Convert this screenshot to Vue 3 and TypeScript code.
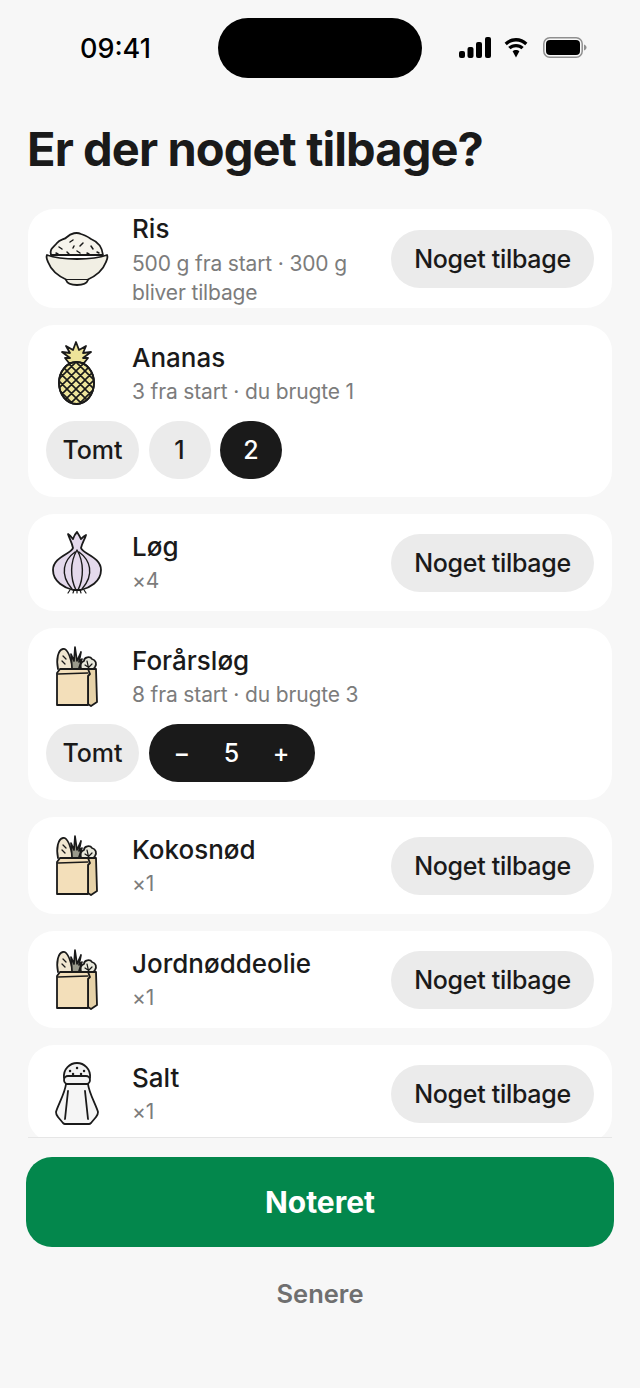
<template>
  <div class="screen">
    <div class="status">
      <span class="time">09:41</span>
      <div class="island"></div>
      <div class="status-icons">
        <svg width="32" height="21" viewBox="0 0 32 21">
          <rect x="0" y="14" width="6" height="7" rx="2" />
          <rect x="8.500" y="10" width="6" height="11" rx="2" />
          <rect x="17" y="5" width="6" height="16" rx="2" />
          <rect x="26" y="0" width="6" height="21" rx="2" />
        </svg>
        <svg width="26" height="21" viewBox="0 0 26 21">
          <path d="M13 4.500c3.600 0 6.800 1.400 9.200 3.700l2.200-2.400C21.400 2.900 17.400 1 13 1S4.600 2.900 1.600 5.800l2.200 2.400C6.200 5.900 9.400 4.500 13 4.500z" />
          <path d="M13 10.200c2.100 0 4 .8 5.400 2.100l2.300-2.400C18.700 8 16 6.900 13 6.900S7.300 8 5.300 9.900l2.300 2.400c1.400-1.300 3.300-2.100 5.400-2.100z" />
          <path d="M13 13c-1.300 0-2.500.5-3.400 1.300L13 20.500l3.400-6.200C15.500 13.500 14.300 13 13 13z" />
        </svg>
        <svg width="44" height="21" viewBox="0 0 44 21">
          <rect x="0.800" y="0.800" width="38.400" height="19.400" rx="6" fill="none" stroke="#8f8f8f" stroke-width="1.500" />
          <rect x="3" y="3" width="34" height="15" rx="4" />
          <path d="M41 7.500c1.500.5 2.500 1.600 2.500 3s-1 2.500-2.500 3z" fill="#8f8f8f" />
        </svg>
      </div>
    </div>

    <h1 class="title">Er der noget tilbage?</h1>

    <div class="list">
      <div
        v-for="item in items"
        :key="item.name"
        class="card"
        :class="{ 'card--tight': item.tight }"
      >
        <div class="row">
          <div class="icon">
            <svg v-if="item.icon === 'rice'" width="62" height="62" viewBox="0 0 62 62" class="line">
              <path d="M5 27C3 21 8 19 11 15c3-4 7-3 10-6 4-4 10-5 14-3 4 1 7 3 10 5 5 2 11 7 12 16z" fill="#f6f4ec" />
              <path d="M1 27c8 3 17 4 30 4s22-1 30-4c1 2 0 5-1 7-3 8-10 14-19 18H21C12 48 5 42 2 34c-1-2-2-5-1-7z" fill="#f1efe4" />
              <path d="M20 52c1 3 5 5 11 5s10-2 11-5" fill="#f1efe4" />
              <path d="M13 19l3 2M24 14l3-2M37 15l-3 3M45 18l2 3M21 24l2 2M31 23l3 2M41 25l2 1M10 25l2 1M27 20l1-2M51 24l2 1" stroke-width="1.500" />
            </svg>

            <svg v-else-if="item.icon === 'pineapple'" width="62" height="62" viewBox="0 0 62 62" class="line">
              <defs>
                <pattern id="hatch" width="9" height="9" patternUnits="userSpaceOnUse" patternTransform="translate(3 1)">
                  <path d="M0 0l9 9M9 0L0 9" stroke="#1a1a1a" stroke-width="1.600" fill="none" />
                </pattern>
              </defs>
              <path d="M23 20l-4-5h5l-8-6 8 1-4-7 7 4 3-8 3 8 7-4-3 7 8-1-8 6h5l-4 5z" fill="#eee49a" />
              <ellipse cx="30.500" cy="40" rx="17.500" ry="21" fill="#eee49a" />
              <ellipse cx="30.500" cy="40" rx="17.500" ry="21" fill="url(#hatch)" />
            </svg>

            <svg v-else-if="item.icon === 'onion'" width="62" height="62" viewBox="0 0 62 62" class="line">
              <path d="M27 16c-1-6-4-10-5-14 3 2 4 4 5 5 1-3 2-5 4-7 2 3 3 5 4 7 1-1 3-3 5-4-1 4-4 8-5 13 2 6 20 9 20 22 0 12-12 18-20 20h-8C19 56 7 50 7 38c0-13 18-16 20-22z" fill="#e4d9ec" />
              <path d="M29 20C18 28 13 42 26 57M33 20c11 8 16 22 3 37M31 18c-7 12-7 28-1 40M31 18c7 12 7 28 1 40" stroke-width="1.400" />
              <path d="M24 58l-2 3M28 58l-1 3M31 58v3M34 58l1 3M38 58l2 3" stroke-width="1.200" />
            </svg>

            <svg v-else-if="item.icon === 'bag'" width="62" height="62" viewBox="0 0 62 62" class="line">
              <path d="M12 23c-2-10 0-19 5-20 5-1 8 10 10 20" fill="#f0e6d0" />
              <path d="M17 10l3 3M16 15l3 3" stroke-width="1.300" />
              <path d="M26 22l-1-14 3 7 1-14 2 14 4-9-2 10 3-3-3 9" fill="#9a9a8c" stroke-width="1.700" />
              <path d="M35 23c-1-4 0-7 3-8 0-4 6-5 8-2 4 1 5 5 3 8l-3 4" fill="#e8e8dc" />
              <path d="M41 15l2 9M39 19l3 2M46 18l-3 3" stroke-width="1.200" />
              <path d="M42 23h8l1 33-6 4-3-2z" fill="#e6d2a8" />
              <path d="M11 27l3-4h28l2 5-2 2v29H11z" fill="#f3dfba" />
              <path d="M12 28l30-1" stroke-width="1.300" />
            </svg>

            <svg v-else width="62" height="62" viewBox="0 0 62 62" class="line">
              <path d="M18 15c-1-9 6-15 13-15s14 6 13 15z" fill="#f2f2f2" />
              <rect x="18" y="13" width="26" height="8" rx="4" fill="#f2f2f2" />
              <path d="M20 21c-1 9-8 21-10 28 0 3 1 4 2 5l5 6c1 1 1 1 2 1h24c1 0 1 0 2-1l5-6c1-1 2-2 2-5-2-7-9-19-10-28z" fill="#f5f5f5" />
              <path d="M22 28l-3 28M39 28l3 28" />
              <path d="M24 8h.100M31 5h.100M38 8h.100M27 11h.100M35 11h.100" stroke-width="2.400" />
            </svg>
          </div>

          <div class="text">
            <div class="name">{{ item.name }}</div>
            <div class="sub">{{ item.sub }}</div>
          </div>

          <button v-if="item.kind === 'plain'" class="chip chip--wide">Noget tilbage</button>
        </div>

        <div v-if="item.kind === 'choice'" class="choices">
          <button class="chip chip--tomt">Tomt</button>
          <button class="chip chip--round">1</button>
          <button class="chip chip--round chip--on">2</button>
        </div>

        <div v-if="item.kind === 'stepper'" class="choices">
          <button class="chip chip--tomt">Tomt</button>
          <div class="stepper">
            <span>−</span>
            <span>5</span>
            <span>+</span>
          </div>
        </div>
      </div>
    </div>

    <div class="footer">
      <button class="primary">Noteret</button>
      <button class="later">Senere</button>
    </div>
  </div>
</template>

<script setup lang="ts">
interface Item {
  name: string
  sub: string
  icon: 'rice' | 'pineapple' | 'onion' | 'bag' | 'salt'
  kind: 'plain' | 'choice' | 'stepper'
  tight?: boolean
}

const items: Item[] = [
  { name: 'Ris', sub: '500 g fra start · 300 g bliver tilbage', icon: 'rice', kind: 'plain', tight: true },
  { name: 'Ananas', sub: '3 fra start · du brugte 1', icon: 'pineapple', kind: 'choice' },
  { name: 'Løg', sub: '×4', icon: 'onion', kind: 'plain' },
  { name: 'Forårsløg', sub: '8 fra start · du brugte 3', icon: 'bag', kind: 'stepper' },
  { name: 'Kokosnød', sub: '×1', icon: 'bag', kind: 'plain' },
  { name: 'Jordnøddeolie', sub: '×1', icon: 'bag', kind: 'plain' },
  { name: 'Salt', sub: '×1', icon: 'salt', kind: 'plain' }
]
</script>

<style>
html,
body {
  margin: 0;
  background: #f7f7f7;
}
</style>

<style scoped>
.screen {
  width: 640px;
  height: 1388px;
  overflow: hidden;
  background: #f7f7f7;
  color: #1a1a1a;
  font-family: Inter, "Noto Sans", sans-serif;
}

.status {
  display: flex;
  align-items: center;
  height: 60px;
  padding: 18px 53px 0 80px;
}

.time {
  width: 138px;
  font-size: 27px;
  font-weight: 500;
  color: #000;
}

.island {
  width: 204px;
  height: 60px;
  border-radius: 30px;
  background: #000;
}

.status-icons {
  display: flex;
  align-items: center;
  gap: 12px;
  margin-left: auto;
  padding-bottom: 2px;
}

.status-icons svg {
  display: block;
  fill: #000;
}

.status-icons svg:last-child {
  margin-left: 2px;
}

.title {
  margin: 0;
  padding-top: 41px;
  padding-left: 27px;
  height: 49px;
  font-size: 47px;
  line-height: 60px;
  font-weight: 700;
  letter-spacing: -0.900px;
  white-space: nowrap;
}

.list {
  display: flex;
  flex-direction: column;
  gap: 17px;
  height: 928px;
  margin: 41px 28px 0;
  overflow: hidden;
}

.card {
  flex: none;
  padding: 18px;
  border-radius: 26px;
  background: #fff;
}

.card--tight {
  padding-top: 5px;
  padding-bottom: 3px;
}

.row {
  display: flex;
  align-items: center;
  min-height: 61px;
}

.icon {
  flex: none;
  width: 62px;
  height: 61px;
  margin-right: 24px;
}

.card--tight .icon {
  margin-top: -2px;
}

.icon svg {
  display: block;
  overflow: visible;
}

.line {
  fill: none;
  stroke: #1a1a1a;
  stroke-width: 1.800;
  stroke-linejoin: round;
  stroke-linecap: round;
}

.text {
  flex: 1;
  min-width: 0;
  margin-bottom: -2px;
}

.name {
  font-size: 26px;
  line-height: 30px;
  font-weight: 500;
}

.sub {
  margin-top: 4px;
  font-size: 21px;
  line-height: 29px;
  color: #7c7c7c;
  letter-spacing: -0.150px;
}

.card--tight .sub {
  margin-top: 5px;
}

.chip {
  flex: none;
  height: 58px;
  padding: 0;
  border: 0;
  border-radius: 29px;
  background: #ebebeb;
  color: #1a1a1a;
  font-family: inherit;
  font-size: 25px;
  font-weight: 500;
}

.chip--wide {
  width: 203px;
  margin-left: 14px;
  letter-spacing: -0.300px;
}

.card--tight .chip--wide {
  margin-top: -2px;
}

.chip--tomt {
  width: 93px;
}

.chip--round {
  width: 62px;
}

.chip--on {
  background: #1a1a1a;
  color: #fff;
}

.choices {
  display: flex;
  gap: 9.500px;
  margin-top: 17px;
}

.stepper {
  display: flex;
  align-items: center;
  justify-content: space-between;
  width: 166px;
  height: 58px;
  padding: 0 25px;
  box-sizing: border-box;
  border-radius: 29px;
  background: #1a1a1a;
  color: #fff;
  font-size: 25px;
  font-weight: 500;
}

.footer {
  display: flex;
  flex-direction: column;
  align-items: center;
  margin: 0 26px;
  position: relative;
  padding-top: 20px;
}

.footer::before {
  content: "";
  position: absolute;
  top: 0;
  left: 2px;
  right: 2px;
  height: 1px;
  background: #e6e6e6;
}

.primary {
  width: 100%;
  height: 90px;
  border: 0;
  border-radius: 26px;
  background: #03874c;
  color: #fff;
  font-family: inherit;
  font-size: 30px;
  font-weight: 700;
}

.later {
  margin-top: 29px;
  padding: 0;
  border: 0;
  background: none;
  color: #6f6f6f;
  font-family: inherit;
  font-size: 25.500px;
  line-height: 36px;
  font-weight: 600;
}
</style>
